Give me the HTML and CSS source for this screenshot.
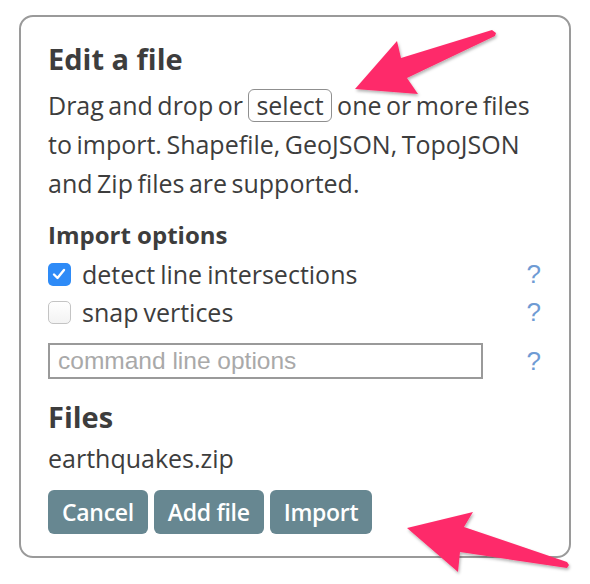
FILE: index.html
```html
<!DOCTYPE html>
<html>
<head>
<meta charset="utf-8">
<link rel="stylesheet" href="styles.css">
</head>
<body>
<div class="panel">
  <h1 class="title">Edit a file</h1>
  <p class="intro">Drag and drop or <span class="select-btn">select</span> one or more files to import. Shapefile, GeoJSON, TopoJSON and Zip files are supported.</p>
  <h3 class="subtitle">Import options</h3>
  <div class="option-row">
    <span class="checkbox checked"><svg viewBox="0 0 22 22" width="22" height="22"><path d="M6 11.5 L9.5 15 L16 7" fill="none" stroke="#fff" stroke-width="2.4" stroke-linecap="round" stroke-linejoin="round"/></svg></span>
    <span class="label">detect line intersections</span>
    <span class="help">?</span>
  </div>
  <div class="option-row">
    <span class="checkbox"></span>
    <span class="label">snap vertices</span>
    <span class="help">?</span>
  </div>
  <div class="option-row input-row">
    <input class="cmd-input" type="text" placeholder="command line options">
    <span class="help">?</span>
  </div>
  <h2 class="files-title">Files</h2>
  <div class="file-name">earthquakes.zip</div>
  <div class="buttons">
    <span class="btn">Cancel</span>
    <span class="btn">Add file</span>
    <span class="btn">Import</span>
  </div>
</div>
<svg class="arrows" width="590" height="584" viewBox="0 0 590 584">
  <defs>
    <filter id="sh" x="-20%" y="-20%" width="140%" height="140%">
      <feDropShadow dx="1" dy="2" stdDeviation="1.5" flood-color="#000" flood-opacity="0.3"/>
    </filter>
  </defs>
  <polygon filter="url(#sh)" fill="#fe2c6a" points="355,89 397,41 401,58 492,30 496,33 495,36 407,78 418,94"/>
  <polygon filter="url(#sh)" fill="#fe2c6a" points="407,528 473,512 464,527 567,562 569,565 567,568 460,552 458,572"/>
</svg>
</body>
</html>
```
FILE: styles.css
```css
html, body {
  margin: 0;
  padding: 0;
  background: #fff;
}
body {
  width: 590px;
  height: 584px;
  overflow: hidden;
  position: relative;
  font-family: "Open Sans", "Liberation Sans", sans-serif;
  color: #3d3d3d;
}
.panel {
  margin: 15px 0 0 19px;
  width: 552px;
  height: 543px;
  box-sizing: border-box;
  border: 2px solid #9a9a9a;
  border-radius: 14px;
  padding: 24px 28px 0 27px;
}
.title {
  margin: 0;
  font-size: 29px;
  line-height: 36px;
  font-weight: 700;
  color: #3d3d3d;
}
.intro {
  margin: 9px 0 0;
  font-size: 25px;
  line-height: 39px;
  word-spacing: -2px;
  width: 500px;
}
.select-btn {
  display: inline-block;
  border: 1px solid #8f8f8f;
  border-radius: 6px;
  padding: 0 7px;
  margin: 0 1px;
  line-height: 31px;
  word-spacing: 0;
}
.subtitle {
  margin: 17px 0 0;
  font-size: 24px;
  line-height: 30px;
  font-weight: 700;
}
.option-row {
  display: flex;
  align-items: center;
  height: 38px;
  font-size: 25px;
  word-spacing: -1.5px;
}
.subtitle + .option-row {
  margin-top: 5px;
}
.checkbox {
  width: 23px;
  height: 23px;
  box-sizing: border-box;
  border: 1px solid #c4c4c4;
  border-radius: 5px;
  background: linear-gradient(#fff, #f3f3f3);
  margin-right: 11px;
  display: flex;
}
.checkbox.checked {
  border: none;
  background: #2e8bf7;
}
.label {
  flex: 1;
}
.help {
  font-family: "Liberation Sans", Arial, sans-serif;
  color: #6f9bd4;
  font-size: 26px;
  width: 15px;
  text-align: right;
}
.input-row {
  height: 36px;
  margin-top: 12px;
}
.input-row .help {
  margin-left: auto;
}
.cmd-input {
  width: 435px;
  height: 36px;
  box-sizing: border-box;
  border: 2px solid #9a9a9a;
  border-radius: 0;
  padding: 0 8px;
  font-family: "Liberation Sans", Arial, sans-serif;
  font-size: 24.5px;
  color: #333;
  outline: none;
}
.cmd-input::placeholder {
  color: #a9a9a9;
}
.files-title {
  margin: 20px 0 0;
  font-size: 29px;
  line-height: 36px;
  font-weight: 700;
}
.file-name {
  margin-top: 4px;
  font-size: 25px;
  line-height: 39px;
}
.buttons {
  display: flex;
  gap: 6px;
  margin-top: 12px;
}
.btn {
  height: 44px;
  line-height: 44px;
  padding: 0 14px;
  background: #678791;
  color: #fff;
  font-size: 23px;
  font-weight: 600;
  letter-spacing: -0.3px;
  border-radius: 6px;
}
.arrows {
  position: absolute;
  left: 0;
  top: 0;
  pointer-events: none;
}
```
